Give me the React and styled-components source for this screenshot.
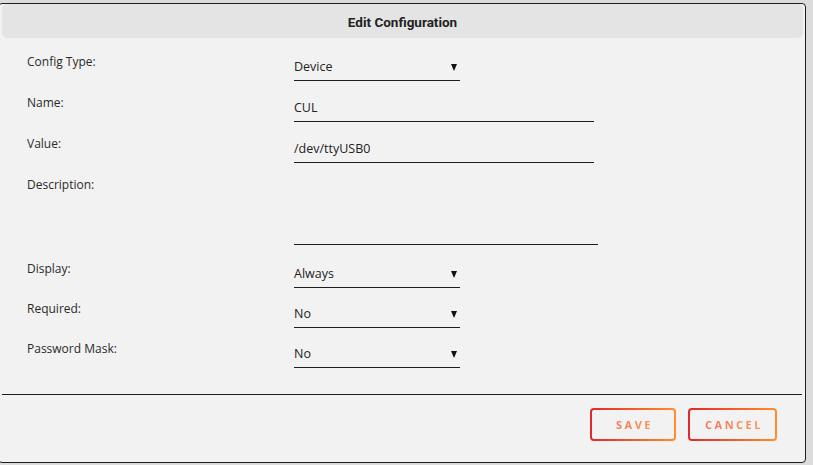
import React from "react";
import styled, { createGlobalStyle } from "styled-components";

const GlobalStyle = createGlobalStyle`
  html, body {
    margin: 0;
    padding: 0;
    background: #dcdcdc;
    overflow: hidden;
  }
  body {
    font-family: "Open Sans", "Liberation Sans", sans-serif;
    color: #222;
  }
`;

const Modal = styled.div`
  box-sizing: border-box;
  margin: 3px 0 0 -2px;
  width: 808px;
  height: 460px;
  background: #f2f2f2;
  border: 1px solid #1e1e1e;
  border-radius: 4px;
  display: flex;
  flex-direction: column;
`;

const Header = styled.div`
  box-sizing: border-box;
  margin: 0 2px 0 3px;
  height: 34px;
  padding-top: 1px;
  background: #e4e4e4;
  border-radius: 5px;
  display: flex;
  align-items: center;
  justify-content: center;
  font-family: "Roboto", "Liberation Sans", sans-serif;
  font-weight: 700;
  font-size: 13.5px;
  color: #222;
`;

const Form = styled.div`
  padding: 16px 0 0 28px;
  display: flex;
  flex-direction: column;
`;

const Row = styled.div`
  display: grid;
  grid-template-columns: 267px auto;
  height: ${(p) => p.$h || 41}px;
`;

const Label = styled.div`
  font-size: 12px;
  line-height: 16px;
  color: #2a2a2a;
`;

const Field = styled.div`
  box-sizing: border-box;
  width: ${(p) => p.$w}px;
  height: ${(p) => p.$height || 26}px;
  margin-top: 1px;
  padding: 4px 0 5px;
  border-bottom: 1px solid #1e1e1e;
  font-size: 12.5px;
  line-height: 16px;
  color: #222;
  display: flex;
  align-items: flex-start;
  justify-content: space-between;
`;

const Arrow = styled.svg`
  width: 6px;
  height: 7px;
  margin: 5px 3px 0 0;
`;

const Divider = styled.div`
  margin: 13px 3px 0 3px;
  height: 1px;
  background: #1e1e1e;
`;

const Actions = styled.div`
  display: flex;
  justify-content: flex-end;
  gap: 12px;
  padding: 13px 28px 0 0;
`;

const Button = styled.button`
  box-sizing: border-box;
  width: ${(p) => p.$w}px;
  height: 33px;
  border: 2px solid transparent;
  border-radius: 4px;
  background: linear-gradient(#f2f2f2, #f2f2f2) padding-box,
    linear-gradient(90deg, #e3262b, #ff8e2e) border-box;
  font-family: "Open Sans", "Liberation Sans", sans-serif;
  font-weight: 700;
  font-size: 11px;
  letter-spacing: 2.5px;
  padding: 0 0 0 3px;
  cursor: pointer;
`;

const ButtonText = styled.span`
  background: linear-gradient(90deg, #f5745c, #fd9449);
  -webkit-background-clip: text;
  background-clip: text;
  color: transparent;
`;

const Caret = () => (
  <Arrow viewBox="0 0 6 7">
    <polygon points="0,0 6,0 3,7" fill="#111" />
  </Arrow>
);

const Select = ({ value }) => (
  <Field $w={166}>
    <span>{value}</span>
    <Caret />
  </Field>
);

export default function App() {
  return (
    <>
      <GlobalStyle />
      <Modal>
        <Header>Edit Configuration</Header>
        <Form>
          <Row>
            <Label>Config Type:</Label>
            <Select value="Device" />
          </Row>
          <Row>
            <Label>Name:</Label>
            <Field $w={300}>CUL</Field>
          </Row>
          <Row>
            <Label>Value:</Label>
            <Field $w={300}>/dev/ttyUSB0</Field>
          </Row>
          <Row $h={84}>
            <Label>Description:</Label>
            <Field $w={304} $height={67} />
          </Row>
          <Row $h={40}>
            <Label>Display:</Label>
            <Select value="Always" />
          </Row>
          <Row $h={40}>
            <Label>Required:</Label>
            <Select value="No" />
          </Row>
          <Row $h={40}>
            <Label>Password Mask:</Label>
            <Select value="No" />
          </Row>
        </Form>
        <Divider />
        <Actions>
          <Button $w={86}>
            <ButtonText>SAVE</ButtonText>
          </Button>
          <Button $w={89}>
            <ButtonText>CANCEL</ButtonText>
          </Button>
        </Actions>
      </Modal>
    </>
  );
}
